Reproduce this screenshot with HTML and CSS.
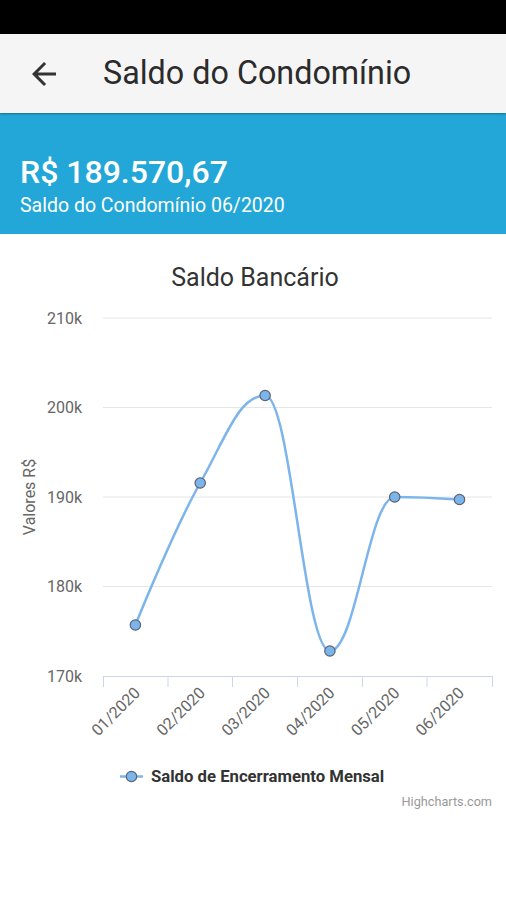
FILE: index.html
```html
<!DOCTYPE html>
<html lang="pt-BR">
<head>
<meta charset="utf-8">
<title>Saldo do Condomínio</title>
<link rel="stylesheet" href="styles.css">
</head>
<body>
<div class="status-bar"></div>
<header class="app-bar">
  <svg class="back-icon" viewBox="0 0 24 24" aria-hidden="true"><path d="M20 11H7.83l5.59-5.59L12 4l-8 8 8 8 1.41-1.41L7.83 13H20v-2z"/></svg>
  <h1 class="app-title">Saldo do Condomínio</h1>
</header>
<section class="banner">
  <div class="amount">R$ 189.570,67</div>
  <div class="amount-label">Saldo do Condomínio 06/2020</div>
</section>
<main class="chart-area">
  <svg class="chart" viewBox="0 234 506 600" width="506" height="600">
    <text class="chart-title" x="255" y="286" text-anchor="middle">Saldo Bancário</text>

    <g class="grid">
      <line x1="103" y1="318" x2="492" y2="318"/>
      <line x1="103" y1="407.5" x2="492" y2="407.5"/>
      <line x1="103" y1="497" x2="492" y2="497"/>
      <line x1="103" y1="586.5" x2="492" y2="586.5"/>
    </g>

    <g class="y-labels" text-anchor="end">
      <text x="82" y="323.5">210k</text>
      <text x="82" y="413">200k</text>
      <text x="82" y="502.5">190k</text>
      <text x="82" y="592">180k</text>
      <text x="82" y="681.5">170k</text>
    </g>
    <text class="y-title" transform="translate(35 497) rotate(-90)" text-anchor="middle">Valores R$</text>

    <g class="x-axis">
      <line x1="103" y1="676.5" x2="493" y2="676.5"/>
      <line x1="103.5" y1="676" x2="103.5" y2="687"/>
      <line x1="168" y1="676" x2="168" y2="687"/>
      <line x1="232.5" y1="676" x2="232.5" y2="687"/>
      <line x1="297.5" y1="676" x2="297.5" y2="687"/>
      <line x1="362.5" y1="676" x2="362.5" y2="687"/>
      <line x1="427" y1="676" x2="427" y2="687"/>
      <line x1="492.5" y1="676" x2="492.5" y2="687"/>
    </g>

    <g class="x-labels" text-anchor="end">
      <text transform="translate(141 694) rotate(-45)">01/2020</text>
      <text transform="translate(206 694) rotate(-45)">02/2020</text>
      <text transform="translate(271 694) rotate(-45)">03/2020</text>
      <text transform="translate(335.5 694) rotate(-45)">04/2020</text>
      <text transform="translate(400.5 694) rotate(-45)">05/2020</text>
      <text transform="translate(465 694) rotate(-45)">06/2020</text>
    </g>

    <path class="series" d="M135.4 625 C135.4 625 174 529 200.2 483 C226 437 239 395.5 265.1 395.5 C291 395.5 304 651 329.9 651 C356 651 369 497 394.7 497 C421 497 459.5 499.5 459.5 499.5"/>
    <g class="markers">
      <circle cx="135.4" cy="625" r="5.2"/>
      <circle cx="200.2" cy="483" r="5.2"/>
      <circle cx="265.1" cy="395.5" r="5.2"/>
      <circle cx="329.9" cy="651" r="5.2"/>
      <circle cx="394.7" cy="497" r="5.2"/>
      <circle cx="459.5" cy="499.5" r="5.2"/>
    </g>

    <g class="legend">
      <line x1="120" y1="776.5" x2="143" y2="776.5"/>
      <circle cx="131.5" cy="776.5" r="5.2"/>
      <text x="151" y="782">Saldo de Encerramento Mensal</text>
    </g>
    <text class="credits" x="492" y="806" text-anchor="end">Highcharts.com</text>
  </svg>
</main>
</body>
</html>
```

FILE: styles.css
```css
html, body {
  margin: 0;
  padding: 0;
  background: #ffffff;
  font-family: Roboto, "Noto Sans", "Liberation Sans", sans-serif;
}

.status-bar {
  height: 34px;
  background: #000000;
}

.app-bar {
  height: 79px;
  background: #f5f5f5;
  display: flex;
  align-items: center;
  padding-left: 26px;
  box-shadow: 0 1px 2px rgba(0, 0, 0, 0.35);
  position: relative;
  z-index: 1;
}

.back-icon {
  width: 36px;
  height: 36px;
  fill: #333333;
  flex: none;
}

.app-title {
  margin: 0 0 0 41px;
  font-size: 32.3px;
  font-weight: 400;
  color: #2b2b2b;
  line-height: 1;
}

.banner {
  height: 121px;
  box-sizing: border-box;
  background: #22a7d8;
  color: #ffffff;
  padding: 42px 20px 0;
  display: flex;
  flex-direction: column;
}

.amount {
  font-size: 32px;
  font-weight: 500;
  line-height: 34px;
}

.amount-label {
  font-size: 19.5px;
  line-height: 33px;
}

.chart-area {
  display: block;
}

.chart {
  display: block;
  font-family: Roboto, "Noto Sans", "Liberation Sans", sans-serif;
}

.chart-title {
  font-size: 25px;
  fill: #333333;
}

.grid line {
  stroke: #e6e6e6;
  stroke-width: 1;
}

.y-labels text,
.x-labels text {
  font-size: 16px;
  fill: #666666;
}

.y-title {
  font-size: 16px;
  fill: #666666;
}

.x-axis line {
  stroke: #ccd6eb;
  stroke-width: 1;
}

.series {
  fill: none;
  stroke: #7cb5ec;
  stroke-width: 2.5;
  stroke-linecap: round;
  stroke-linejoin: round;
}

.markers circle,
.legend circle {
  fill: #7cb5ec;
  stroke: #5a6470;
  stroke-width: 1.2;
}

.legend line {
  stroke: #7cb5ec;
  stroke-width: 2.5;
}

.legend text {
  font-size: 16.7px;
  font-weight: 700;
  fill: #333333;
}

.credits {
  font-size: 12.7px;
  fill: #999999;
}
```
